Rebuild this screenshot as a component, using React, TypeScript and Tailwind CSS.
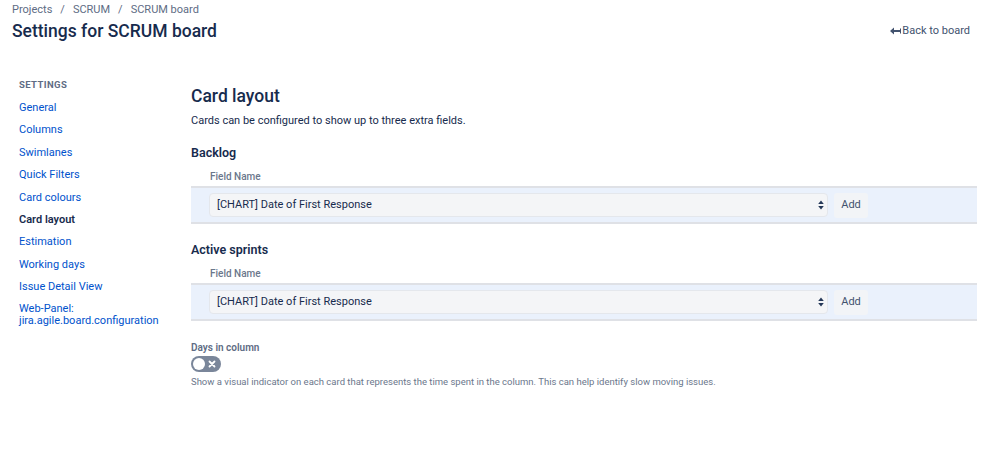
const navItems = [
  'General',
  'Columns',
  'Swimlanes',
  'Quick Filters',
  'Card colours',
  'Card layout',
  'Estimation',
  'Working days',
  'Issue Detail View',
];

function FieldRow() {
  return (
    <div className="mt-[8px]">
      <div className="pl-[19px] text-[10px] font-medium text-[#6b778c] leading-[14px]">Field Name</div>
      <div className="mt-[2px] h-[38px] border-y-2 border-[#dfe1e6] bg-[#eaf1fc] flex items-center pl-[18px] pr-[109px]">
        <div className="flex-1 h-[24px] rounded-[4px] border border-[#e4e7ec] bg-[#f4f5f7] flex items-center justify-between pl-[7px] pr-[3px]">
          <span className="text-[11px] text-[#172b4d]">[CHART] Date of First Response</span>
          <svg width="6" height="10" viewBox="0 0 6 10" className="fill-[#253858]">
            <path d="M3 0.5 L5.8 4 L0.2 4 Z M3 9.5 L5.8 6 L0.2 6 Z" />
          </svg>
        </div>
        <button className="ml-[6px] h-[25px] w-[34px] rounded-[3px] bg-[#f2f4f7] text-[11px] text-[#42526e]">Add</button>
      </div>
    </div>
  );
}

export default function App() {
  return (
    <div className="w-[999px] h-[449px] bg-white font-['Roboto',sans-serif] text-[#172b4d] overflow-hidden">
      <div className="flex items-start justify-between pl-[12px] pr-[29px]">
        <div>
          <div className="text-[11px] text-[#5e6c84] leading-[14px] mt-[3px] flex gap-[8px]">
            <span>Projects</span>
            <span>/</span>
            <span>SCRUM</span>
            <span>/</span>
            <span>SCRUM board</span>
          </div>
          <h1 className="text-[17.5px] font-medium leading-[24px] mt-[2px]">Settings for SCRUM board</h1>
        </div>
        <div className="mt-[23px] flex items-center gap-[1px] text-[11px] text-[#42526e]">
          <svg width="11" height="8" viewBox="0 0 11 8" className="fill-[#42526e]">
            <path d="M0 4 L4 0.5 L4 3 L10 3 L10 1.5 L11 1.5 L11 6.5 L10 6.5 L10 5 L4 5 L4 7.5 Z" />
          </svg>
          <span>Back to board</span>
        </div>
      </div>

      <div className="flex mt-[35px]">
        <aside className="w-[191px] shrink-0 pl-[19px]">
          <div className="text-[9.5px] font-bold tracking-[0.4px] text-[#5e6c84] leading-[14px]">SETTINGS</div>
          <ul className="mt-[9px] text-[11px] leading-[14px]">
            {navItems.map((item) => (
              <li
                key={item}
                className={
                  item === 'Card layout'
                    ? 'h-[22.4px] font-semibold text-[#172b4d]'
                    : 'h-[22.4px] text-[#0052cc]'
                }
              >
                {item}
              </li>
            ))}
            <li className="text-[#0052cc] leading-[12px]">
              Web-Panel:
              <br />
              jira.agile.board.configuration
            </li>
          </ul>
        </aside>

        <main className="flex-1 pr-[22px]">
          <h2 className="text-[17.5px] font-medium leading-[24px] mt-[6px]">Card layout</h2>
          <p className="text-[11px] leading-[14px] mt-[6px]">Cards can be configured to show up to three extra fields.</p>

          <h3 className="text-[12.5px] font-semibold leading-[18px] mt-[16px]">Backlog</h3>
          <FieldRow />

          <h3 className="text-[12.5px] font-semibold leading-[18px] mt-[17px]">Active sprints</h3>
          <FieldRow />

          <div className="mt-[20px] text-[10px] font-semibold text-[#5e6c84] leading-[14px]">Days in column</div>
          <div className="mt-[1px] w-[30px] h-[16px] rounded-full bg-[#7a869a] flex items-center justify-between px-[2px]">
            <span className="w-[12px] h-[12px] rounded-full bg-white" />
            <svg width="8" height="8" viewBox="0 0 8 8" className="mr-[3px]">
              <path d="M1.5 1.5 L6.5 6.5 M6.5 1.5 L1.5 6.5" stroke="white" strokeWidth="1.8" strokeLinecap="round" />
            </svg>
          </div>
          <p className="text-[9.5px] text-[#6b778c] leading-[14px] mt-[3px]">
            Show a visual indicator on each card that represents the time spent in the column. This can help identify slow moving issues.
          </p>
        </main>
      </div>
    </div>
  );
}
